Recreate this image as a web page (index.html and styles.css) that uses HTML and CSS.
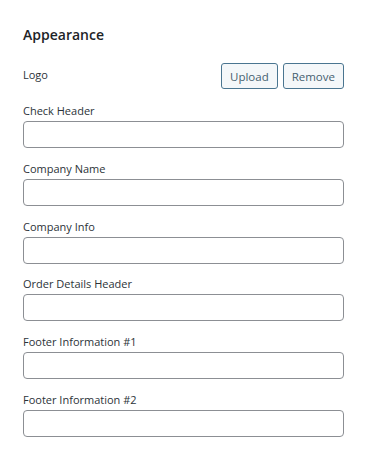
FILE: index.html
```html
<!DOCTYPE html>
<html lang="en">
<head>
    <meta charset="UTF-8">
    <title>Appearance</title>
    <link rel="stylesheet" href="styles.css">
</head>
<body>
    <div class="panel">
        <h2 class="panel-title">Appearance</h2>

        <!-- Logo row -->
        <div class="logo-row">
            <span class="field-label">Logo</span>
            <div class="logo-actions">
                <button type="button" class="btn">Upload</button>
                <button type="button" class="btn">Remove</button>
            </div>
        </div>

        <div class="field">
            <label class="field-label" for="check_header">Check Header</label>
            <input type="text" id="check_header" class="input-field">
        </div>
        <div class="field">
            <label class="field-label" for="company_name">Company Name</label>
            <input type="text" id="company_name" class="input-field">
        </div>
        <div class="field">
            <label class="field-label" for="company_info">Company Info</label>
            <input type="text" id="company_info" class="input-field">
        </div>
        <div class="field">
            <label class="field-label" for="order_header">Order Details Header</label>
            <input type="text" id="order_header" class="input-field">
        </div>
        <div class="field">
            <label class="field-label" for="footer_1">Footer Information #1</label>
            <input type="text" id="footer_1" class="input-field">
        </div>
        <div class="field">
            <label class="field-label" for="footer_2">Footer Information #2</label>
            <input type="text" id="footer_2" class="input-field">
        </div>
    </div>
</body>
</html>
```

FILE: styles.css
```css
body {
    margin: 0;
    background: #ffffff;
    font-family: 'Open Sans', 'Noto Sans', sans-serif;
    color: #2c3338;
}
.panel {
    padding: 25px 23px 20px 23px;
}
.panel-title {
    font-size: 14px;
    font-weight: 600;
    line-height: 20px;
    margin: 0 0 18px;
    color: #1d2327;
}
.logo-row {
    display: flex;
    justify-content: space-between;
    align-items: center;
    margin-bottom: 14px;
}
.logo-actions {
    display: flex;
    gap: 5px;
}
.btn {
    height: 26px;
    padding: 0 8px;
    border: 1px solid #4a7590;
    border-radius: 3px;
    background: #f4f7f9;
    color: #465f70;
    font-family: inherit;
    font-size: 11.5px;
    cursor: pointer;
}
.field {
    display: flex;
    flex-direction: column;
    margin-bottom: 12.8px;
}
.field-label {
    font-size: 11px;
    line-height: 16px;
    margin-bottom: 2px;
}
.input-field {
    box-sizing: border-box;
    width: 100%;
    height: 27px;
    border: 1px solid #8c8f94;
    border-radius: 4px;
    background: #ffffff;
    outline: none;
}
```
